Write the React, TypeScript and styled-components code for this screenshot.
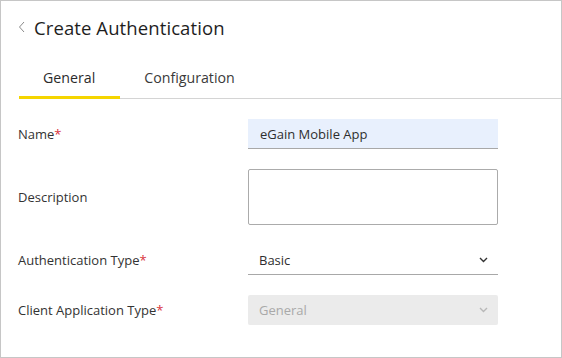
import React from "react";
import styled, { createGlobalStyle } from "styled-components";

const Global = createGlobalStyle`
  html, body { margin: 0; padding: 0; background: #fff; }
  body { font-family: "Open Sans", "Noto Sans", Arial, sans-serif; }
  * { box-sizing: border-box; }
`;

const Frame = styled.div`
  width: 562px;
  height: 358px;
  border: 1px solid #c6c6c6;
  background: #fff;
  display: flex;
  flex-direction: column;
  overflow: hidden;
`;

const Header = styled.div`
  display: flex;
  align-items: center;
  gap: 8px;
  height: 52px;
  padding: 1px 0 0 17px;
`;

const BackButton = styled.span`
  display: flex;
  align-items: center;
  width: 8px;
  height: 12px;
  margin-top: -2px;
`;

const Title = styled.h1`
  margin: 0;
  font-size: 18.5px;
  font-weight: 400;
  color: #1e1e1e;
  letter-spacing: 0.1px;
`;

const TabBar = styled.div`
  display: flex;
  margin-left: 18px;
  height: 46px;
  border-bottom: 1px solid #d4d4d4;
`;

const Tab = styled.div<{ $active?: boolean }>`
  position: relative;
  display: flex;
  align-items: center;
  padding: 3px 25px 0 24px;
  font-size: 14.2px;
  color: ${(p) => (p.$active ? "#2b2b2b" : "#3a3a3a")};
  &::after {
    content: "";
    position: absolute;
    left: 0;
    right: 0;
    bottom: -1px;
    height: 3px;
    background: ${(p) => (p.$active ? "#f5d500" : "transparent")};
  }
`;

const Form = styled.div`
  display: grid;
  grid-template-columns: 230px 250px;
  row-gap: 20px;
  padding: 20px 0 0 17px;
`;

const Label = styled.div`
  display: flex;
  align-items: center;
  font-size: 13px;
  color: #333;
`;

const Req = styled.span`
  color: #d8333b;
`;

const TextInput = styled.div`
  height: 30px;
  display: flex;
  align-items: center;
  padding: 1px 12px 0 12px;
  background: #e8f0fd;
  border-bottom: 1px solid #a8a8a8;
  font-size: 13px;
  color: #2e2e2e;
`;

const TextArea = styled.div`
  height: 56px;
  border: 1px solid #ababab;
  border-radius: 2px;
  background: #fff;
`;

const Select = styled.div<{ $disabled?: boolean }>`
  height: 30px;
  display: flex;
  align-items: center;
  justify-content: space-between;
  padding: 0 10px 0 11px;
  font-size: 13px;
  color: ${(p) => (p.$disabled ? "#a9a9a9" : "#2e2e2e")};
  background: ${(p) => (p.$disabled ? "#ebebeb" : "#fff")};
  border-radius: ${(p) => (p.$disabled ? "2px" : "0")};
  border-bottom: 1px solid ${(p) => (p.$disabled ? "#ebebeb" : "#a8a8a8")};
`;

const Chevron = ({ color }: { color: string }) => (
  <svg width="9" height="6" viewBox="0 0 9 6">
    <polyline points="1,1 4.5,4.5 8,1" fill="none" stroke={color} strokeWidth="1.4" />
  </svg>
);

export default function App() {
  return (
    <>
      <Global />
      <Frame>
        <Header>
          <BackButton>
            <svg width="8" height="12" viewBox="0 0 8 12">
              <polyline points="6,1 1.5,6 6,11" fill="none" stroke="#8a8a8a" strokeWidth="1" />
            </svg>
          </BackButton>
          <Title>Create Authentication</Title>
        </Header>
        <TabBar>
          <Tab $active>General</Tab>
          <Tab>Configuration</Tab>
        </TabBar>
        <Form>
          <Label>
            Name<Req>*</Req>
          </Label>
          <TextInput>eGain Mobile App</TextInput>
          <Label>Description</Label>
          <TextArea />
          <Label>
            Authentication Type<Req>*</Req>
          </Label>
          <Select>
            Basic
            <Chevron color="#333" />
          </Select>
          <Label>
            Client Application Type<Req>*</Req>
          </Label>
          <Select $disabled>
            General
            <Chevron color="#b8b8b8" />
          </Select>
        </Form>
      </Frame>
    </>
  );
}
